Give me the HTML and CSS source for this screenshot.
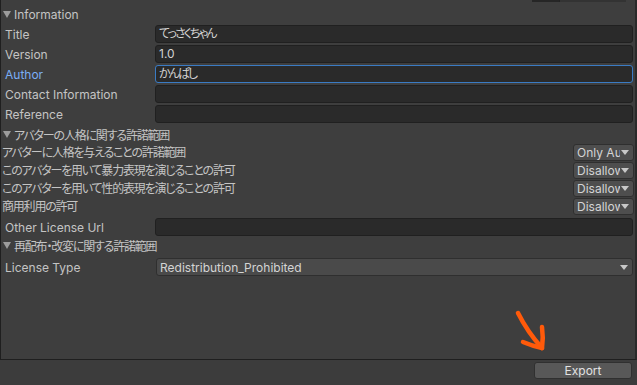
FILE: index.html
```html
<!DOCTYPE html>
<html lang="ja">
<head>
    <meta charset="UTF-8">
    <title>VRM Export</title>
    <link rel="stylesheet" href="styles.css">
</head>
<body>
    <div class="panel">
        <div class="stub">
            <span class="stub-a"></span>
            <span class="stub-b"></span>
        </div>

        <!-- Information -->
        <div class="foldout first"><span class="tri"></span>Information</div>
        <div class="field-row first">
            <label>Title</label>
            <div class="field kana">てっさくちゃん</div>
        </div>
        <div class="field-row">
            <label>Version</label>
            <div class="field">1.0</div>
        </div>
        <div class="field-row">
            <label class="focused">Author</label>
            <div class="field kana focused">かんぱし</div>
        </div>
        <div class="field-row">
            <label>Contact Information</label>
            <div class="field"></div>
        </div>
        <div class="field-row">
            <label>Reference</label>
            <div class="field"></div>
        </div>

        <!-- 人格 -->
        <div class="foldout ja"><span class="tri"></span>アバターの人格に関する許諾範囲</div>
        <div class="perm-row">
            <span class="perm-label ja">アバターに人格を与えることの許諾範囲</span>
            <div class="popup small"><span class="popup-text">Only Author</span><span class="arrow"></span></div>
        </div>
        <div class="perm-row">
            <span class="perm-label ja">このアバターを用いて暴力表現を演じることの許可</span>
            <div class="popup small"><span class="popup-text">Disallow</span><span class="arrow"></span></div>
        </div>
        <div class="perm-row">
            <span class="perm-label ja">このアバターを用いて性的表現を演じることの許可</span>
            <div class="popup small"><span class="popup-text">Disallow</span><span class="arrow"></span></div>
        </div>
        <div class="perm-row">
            <span class="perm-label ja">商用利用の許可</span>
            <div class="popup small"><span class="popup-text">Disallow</span><span class="arrow"></span></div>
        </div>
        <div class="field-row url">
            <label>Other License Url</label>
            <div class="field"></div>
        </div>

        <!-- 再配布 -->
        <div class="foldout tight ja"><span class="tri"></span>再配布・改変に関する許諾範囲</div>
        <div class="field-row license">
            <label>License Type</label>
            <div class="popup wide"><span class="popup-text">Redistribution_Prohibited</span><span class="arrow"></span></div>
        </div>
    </div>

    <div class="footer">
        <button class="export-btn">Export</button>
    </div>

    <!-- 手書きの矢印 -->
    <svg class="marker" width="44" height="54" viewBox="0 0 44 54">
        <path d="M8 8 C 14 20, 22 32, 32 43" fill="none" stroke="#ff5a0a" stroke-width="4.5" stroke-linecap="round"/>
        <path d="M13 37 C 20 40, 27 42, 32 43 C 33 36, 33 29, 32 22" fill="none" stroke="#ff5a0a" stroke-width="4.5" stroke-linecap="round" stroke-linejoin="round"/>
    </svg>
</body>
</html>
```

FILE: styles.css
```css
body {
    margin: 0;
    width: 637px;
    height: 385px;
    overflow: hidden;
    position: relative;
    background-color: #3c3c3c;
    font-family: Inter, "Noto Sans CJK JP", sans-serif;
    font-size: 12px;
    color: #c4c4c4;
    font-feature-settings: "palt";
}

.ja {
    letter-spacing: -1.2px;
}

.panel {
    height: 359px;
    background-color: #3e3e3e;
    border-left: 1px solid #1f1f1f;
    border-bottom: 1px solid #1f1f1f;
    border-right: 2px solid #2a2a2a;
}

/* top edge of a cut-off toolbar */
.stub {
    display: flex;
    justify-content: flex-end;
    height: 3px;
    padding-right: 9px;
}

.stub-a {
    width: 27px;
    height: 2px;
    background-color: #262626;
}

.stub-b {
    width: 66px;
    height: 2px;
    background-color: #333;
    border-left: 1px solid #222;
}

/* foldout headers */
.foldout {
    display: flex;
    align-items: center;
    height: 19px;
    margin-top: 2px;
    padding-left: 2px;
    white-space: nowrap;
}

.foldout.tight {
    margin-top: 0;
}

.tri {
    width: 0;
    height: 0;
    border-left: 4px solid transparent;
    border-right: 4px solid transparent;
    border-top: 7px solid #9c9c9c;
    margin-right: 3px;
}

/* label + text field */
.field-row {
    display: flex;
    align-items: center;
    height: 18px;
    margin-top: 2px;
}

.field-row.first {
    margin-top: 1px;
}

.field-row.license {
    margin-top: 3px;
}

.field-row label {
    width: 150px;
    padding-left: 4px;
    flex-shrink: 0;
    white-space: nowrap;
}

.field-row label.focused {
    color: #7baef5;
}

.field {
    flex: 1;
    box-sizing: border-box;
    height: 18px;
    margin-right: 2px;
    padding-left: 3px;
    line-height: 16px;
    background-color: #2a2a2a;
    border: 1px solid #202020;
    border-radius: 3px;
    color: #d2d2d2;
}

.field.kana {
    letter-spacing: -2px;
}

.field.focused {
    border-color: #3a7bc4;
}

/* permission rows */
.perm-row {
    display: flex;
    align-items: flex-start;
    height: 18px;
}

.perm-label {
    flex: 1;
    line-height: 17px;
    padding-left: 1px;
    white-space: nowrap;
    overflow: hidden;
}

/* popups */
.popup {
    display: flex;
    align-items: center;
    box-sizing: border-box;
    height: 17px;
    padding-left: 3px;
    padding-right: 4px;
    background-color: #4e4e4e;
    border: 1px solid #2f2f2f;
    border-radius: 3px;
    color: #d4d4d4;
    overflow: hidden;
}

.popup.small {
    width: 61px;
    margin-right: 1px;
}

.popup.wide {
    flex: 1;
    height: 18px;
    margin-left: 1px;
    margin-right: 2px;
    background-color: #4a4a4a;
}

.popup-text {
    flex: 1;
    white-space: nowrap;
    overflow: hidden;
}

.arrow {
    width: 0;
    height: 0;
    margin-left: 1px;
    border-left: 4px solid transparent;
    border-right: 4px solid transparent;
    border-top: 5px solid #c8c8c8;
}

/* footer */
.footer {
    display: flex;
    justify-content: flex-end;
    padding-top: 2px;
    padding-right: 5px;
}

.export-btn {
    width: 98px;
    height: 17px;
    padding: 0;
    background-color: #585858;
    border: 1px solid #303030;
    border-radius: 3px;
    font-family: Inter, sans-serif;
    font-size: 12px;
    color: #e2e2e2;
}

.marker {
    position: absolute;
    left: 510px;
    top: 305px;
}
```
